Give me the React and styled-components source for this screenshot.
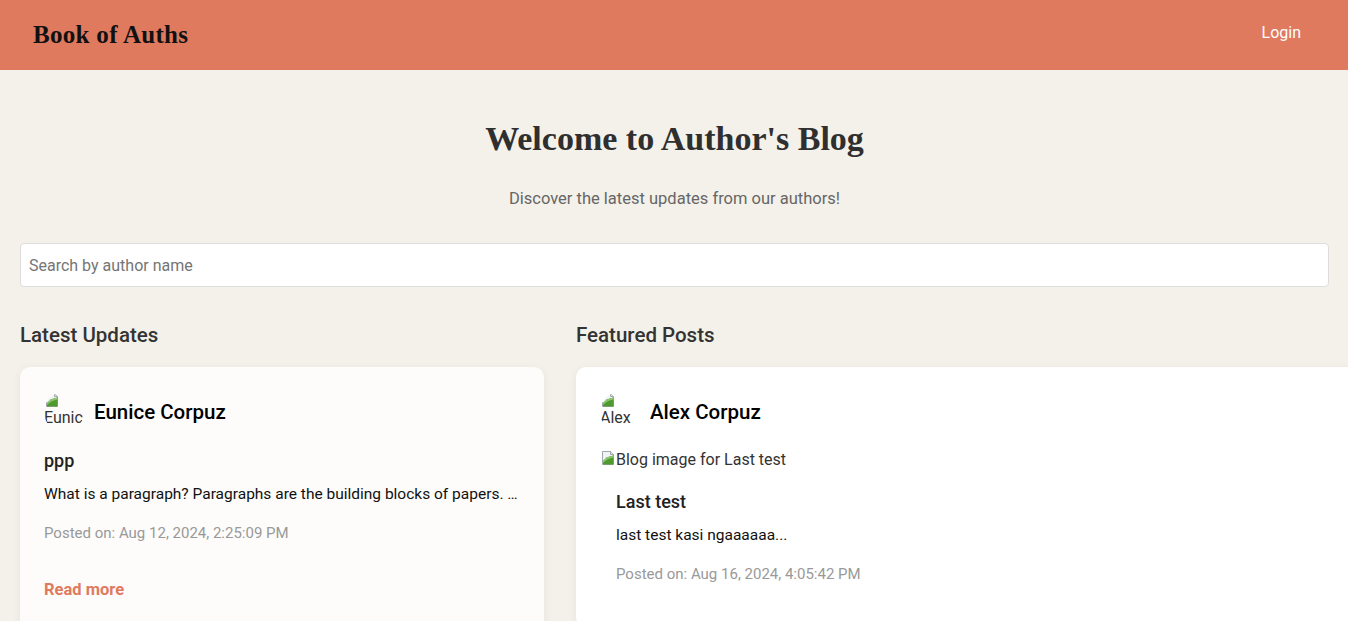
import React from 'react';
import styled, { createGlobalStyle } from 'styled-components';

const GlobalStyle = createGlobalStyle`
  html, body {
    margin: 0;
    padding: 0;
    background: #f4f1ea;
    font-family: Roboto, "Liberation Sans", Arial, sans-serif;
    overflow-x: hidden;
  }
  * { box-sizing: border-box; }
`;

const serif = `"Liberation Serif", "DejaVu Serif", Georgia, serif`;

const Header = styled.header`
  height: 70px;
  background: #e07a5f;
  display: flex;
  align-items: center;
  justify-content: space-between;
  padding: 0 31px 0 33px;
`;

const Brand = styled.div`
  font-family: ${serif};
  font-weight: 700;
  font-size: 25px;
  color: #111;
  letter-spacing: 0.3px;
  margin-top: 0;
`;

const LoginButton = styled.button`
  background: transparent;
  border: none;
  color: #fff;
  font-family: Roboto, sans-serif;
  font-size: 16px;
  font-weight: 400;
  padding: 8px 16px;
  margin-top: -5px;
  cursor: pointer;
`;

const Main = styled.main`
  padding: 0 19px 0 20px;
`;

const Hero = styled.section`
  text-align: center;
  padding-top: 48px;
`;

const Title = styled.h1`
  font-family: ${serif};
  font-weight: 700;
  font-size: 34px;
  line-height: 42px;
  color: #2f2f2f;
  margin: 0;
`;

const Subtitle = styled.p`
  font-size: 16.5px;
  line-height: 19px;
  color: #666;
  margin: 29px 0 0;
`;

const Search = styled.input`
  display: block;
  width: 100%;
  height: 44px;
  margin-top: 35px;
  padding: 0 8px;
  border: 1px solid #ddd;
  border-radius: 4px;
  background: #fff;
  font-family: Roboto, sans-serif;
  font-size: 16px;
  color: #333;
  outline: none;
  &::placeholder { color: #757575; }
`;

const Columns = styled.div`
  display: grid;
  grid-template-columns: 524px 1048px;
  column-gap: 32px;
  margin-top: 36px;
`;

const Column = styled.section``;

const ColumnTitle = styled.h2`
  font-size: 20.5px;
  line-height: 24px;
  font-weight: 500;
  color: #333;
  margin: 0 0 20px;
`;

const Card = styled.article`
  background: ${(p) => (p.featured ? '#fff' : '#fdfcfa')};
  border-radius: 10px;
  padding: 24px 24px 30px;
  box-shadow: 0 2px 10px rgba(0, 0, 0, 0.06);
  min-height: 260px;
`;

const AuthorRow = styled.div`
  display: flex;
  align-items: center;
  gap: 10px;
  height: 40px;
  margin-top: 1px;
`;

const Avatar = styled.div`
  width: 40px;
  height: 40px;
  border-radius: 50%;
  overflow: hidden;
  flex: none;
  font-size: 16px;
  line-height: 19px;
  color: #333;
  white-space: nowrap;
`;

const AuthorName = styled.span`
  font-size: 20.5px;
  font-weight: 500;
  color: #000;
`;

const PostTitle = styled.h3`
  font-size: 18px;
  line-height: 21px;
  font-weight: 500;
  color: #222;
  margin: ${(p) => (p.featured ? '22px 0 14px' : '18px 0 14px')};
`;

const Excerpt = styled.p`
  font-size: 15.5px;
  line-height: 18px;
  color: #111;
  margin: 0 0 21px;
  white-space: nowrap;
  overflow: hidden;
`;

const Posted = styled.p`
  font-size: 15px;
  line-height: 18px;
  color: #999;
  margin: 0;
`;

const ReadMore = styled.a`
  display: block;
  margin-top: 38px;
  font-size: 16.5px;
  line-height: 19px;
  font-weight: 700;
  color: #e07a5f;
  text-decoration: none;
`;

const ImageAlt = styled.div`
  margin-top: 16px;
  font-size: 16px;
  line-height: 19px;
  color: #333;
  display: flex;
  align-items: flex-start;
  padding-top: 2px;
`;

const PostBody = styled.div`
  padding: 0 16px;
`;

const BrokenIcon = () => (
  <svg width="16" height="16" viewBox="0 0 16 16" style={{ display: 'block', flex: 'none' }}>
    <path d="M2.5 1.5h8l3 3v10h-11z" fill="#f1f3f5" stroke="#a0a6ad" />
    <path d="M10.5 1.5v3h3" fill="#dfe3e8" stroke="#a0a6ad" />
    <path d="M3 14.5V11c2.5-3 6-5 10.5-5.5v9z" fill="#4e9a2e" />
    <path d="M3 11c2.5-3 6-5 10.5-5.5v2C9.5 8 6 10 3 13z" fill="#8cc46e" />
  </svg>
);

const AvatarBroken = ({ alt }) => (
  <Avatar>
    <BrokenIcon />
    {alt}
  </Avatar>
);

export default function App() {
  return (
    <>
      <GlobalStyle />
      <Header>
        <Brand>Book of Auths</Brand>
        <LoginButton>Login</LoginButton>
      </Header>
      <Main>
        <Hero>
          <Title>Welcome to Author's Blog</Title>
          <Subtitle>Discover the latest updates from our authors!</Subtitle>
        </Hero>
        <Search placeholder="Search by author name" />
        <Columns>
          <Column>
            <ColumnTitle>Latest Updates</ColumnTitle>
            <Card>
              <AuthorRow>
                <AvatarBroken alt="Eunice" />
                <AuthorName>Eunice Corpuz</AuthorName>
              </AuthorRow>
              <PostTitle>ppp</PostTitle>
              <Excerpt>What is a paragraph? Paragraphs are the building blocks of papers. …</Excerpt>
              <Posted>Posted on: Aug 12, 2024, 2:25:09 PM</Posted>
              <ReadMore href="#">Read more</ReadMore>
            </Card>
          </Column>
          <Column>
            <ColumnTitle>Featured Posts</ColumnTitle>
            <Card featured>
              <AuthorRow>
                <AvatarBroken alt="Alex" />
                <AuthorName>Alex Corpuz</AuthorName>
              </AuthorRow>
              <ImageAlt>
                <BrokenIcon />
                Blog image for Last test
              </ImageAlt>
              <PostBody>
                <PostTitle featured>Last test</PostTitle>
                <Excerpt>last test kasi ngaaaaaa...</Excerpt>
                <Posted>Posted on: Aug 16, 2024, 4:05:42 PM</Posted>
              </PostBody>
            </Card>
          </Column>
        </Columns>
      </Main>
    </>
  );
}
